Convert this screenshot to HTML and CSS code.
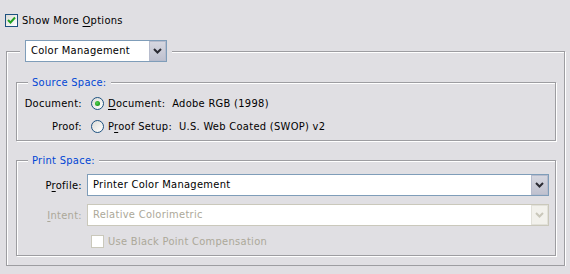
FILE: index.html
```html
<!DOCTYPE html>
<html>
<head>
    <title>Print Options</title>
    <link rel="stylesheet" href="styles.css">
</head>
<body>
    <div class="top">
        <label class="check">
            <span class="box"><svg width="9" height="9" viewBox="0 0 9 9"><polyline points="1,4 3.5,6.5 8,1.5" fill="none" stroke="#21a121" stroke-width="2"/></svg></span>
            <span>Show More <u>O</u>ptions</span>
        </label>
    </div>

    <fieldset class="group outer">
        <legend class="outer-legend">
            <div class="combo mode">
                <span class="val">Color Management</span>
                <span class="btn"><svg width="9" height="6" viewBox="0 0 9 6"><polyline points="1,1 4.5,4.5 8,1" fill="none" stroke="#2b2b33" stroke-width="2"/></svg></span>
            </div>
        </legend>
        <div class="outer-body">
            <fieldset class="group inner source">
                <legend>Source Space:</legend>
                <div class="rows">
                    <span class="lbl">Document:</span>
                    <label class="opt"><span class="radio on"></span><span><u>D</u>ocument:&nbsp; Adobe RGB (1998)</span></label>
                    <span class="lbl">Proof:</span>
                    <label class="opt"><span class="radio"></span><span>P<u>r</u>oof Setup:&nbsp; U.S. Web Coated (SWOP) v2</span></label>
                </div>
            </fieldset>

            <fieldset class="group inner print">
                <legend>Print Space:</legend>
                <div class="rows">
                    <span class="lbl">P<u>r</u>ofile:</span>
                    <div class="combo">
                        <span class="val">Printer Color Management</span>
                        <span class="btn"><svg width="9" height="6" viewBox="0 0 9 6"><polyline points="1,1 4.5,4.5 8,1" fill="none" stroke="#2b2b33" stroke-width="2"/></svg></span>
                    </div>
                    <span class="lbl off"><u>I</u>ntent:</span>
                    <div class="combo off">
                        <span class="val">Relative Colorimetric</span>
                        <span class="btn"><svg width="9" height="6" viewBox="0 0 9 6"><polyline points="1,1 4.5,4.5 8,1" fill="none" stroke="#c9c7ba" stroke-width="2"/></svg></span>
                    </div>
                    <span></span>
                    <label class="check off bpc"><span class="box"></span><span>Use Black Point Compensation</span></label>
                </div>
            </fieldset>
        </div>
    </fieldset>
</body>
</html>
```

FILE: styles.css
```css
body {
    margin: 0;
    background-color: #e0dfe3;
    color: #000;
    font-family: "DejaVu Sans", sans-serif;
    font-stretch: condensed;
    font-size: 11px;
    line-height: 13px;
    letter-spacing: 0.3px;
}
u {
    text-decoration-thickness: 1px;
    text-underline-offset: 2px;
}
.top {
    display: flex;
    padding: 14px 0 0 5px;
}
.check {
    display: flex;
    align-items: center;
    gap: 4px;
}
.box {
    width: 13px;
    height: 13px;
    box-sizing: border-box;
    border: 1px solid #1c5180;
    background: linear-gradient(135deg, #dcdcd7, #fff);
    display: flex;
    align-items: center;
    justify-content: center;
}
.check.off {
    color: #aca899;
}
.check.off .box {
    border-color: #cac8bb;
    background: #fff;
}
.group {
    border: 1px solid #9d9da1;
    box-shadow: inset 1px 1px 0 #fff, 1px 1px 0 #fff;
    padding: 0;
    min-width: 0;
}
.outer {
    margin: 13px 5px 0 6px;
}
.outer-legend {
    margin-left: 13px;
    padding: 0 5px;
    background-color: #e0dfe3;
}
.outer-body {
    padding: 14px 8px 9px 9px;
}
.inner {
    margin: 0;
}
.inner legend {
    margin-left: 11px;
    padding: 0 4px;
    color: #0046d5;
    background-color: #e0dfe3;
}
.print {
    margin-top: 13px;
}
.rows {
    display: grid;
    grid-template-columns: 65px 1fr;
    column-gap: 5px;
    align-items: center;
    padding: 0 6px 7px 0;
}
.source .rows {
    padding-top: 8px;
    row-gap: 10px;
}
.print .rows {
    padding-top: 7px;
    row-gap: 8px;
}
.lbl {
    text-align: right;
}
.lbl.off {
    color: #aca899;
}
.opt {
    display: flex;
    align-items: center;
    gap: 4px;
    margin-left: 4px;
}
.radio {
    position: relative;
    width: 13px;
    height: 13px;
    box-sizing: border-box;
    border: 1px solid #1c5180;
    border-radius: 50%;
    background: linear-gradient(135deg, #dcdcd7, #fff);
}
.radio.on::after {
    content: "";
    position: absolute;
    left: 3px;
    top: 3px;
    width: 5px;
    height: 5px;
    border-radius: 50%;
    background: radial-gradient(circle at 40% 40%, #55d355, #21a121 60%, #1a7f1a);
}
.bpc {
    margin-left: 4px;
    margin-top: 1px;
}
.combo {
    display: flex;
    height: 22px;
    box-sizing: border-box;
    border: 1px solid #7f9db9;
    background-color: #fff;
}
.combo .val {
    flex: 1;
    padding-left: 5px;
    line-height: 20px;
    white-space: nowrap;
}
.combo .btn {
    width: 17px;
    box-sizing: border-box;
    border: 1px solid #b7bccd;
    background: linear-gradient(#d6d7e0, #bfc1cf);
    display: flex;
    align-items: center;
    justify-content: center;
}
.combo.mode {
    width: 142px;
}
.combo.off {
    border-color: #cac8bb;
    color: #aca899;
}
.combo.off .btn {
    border-color: #e2e1da;
    background: #f2f1ec;
}
```
